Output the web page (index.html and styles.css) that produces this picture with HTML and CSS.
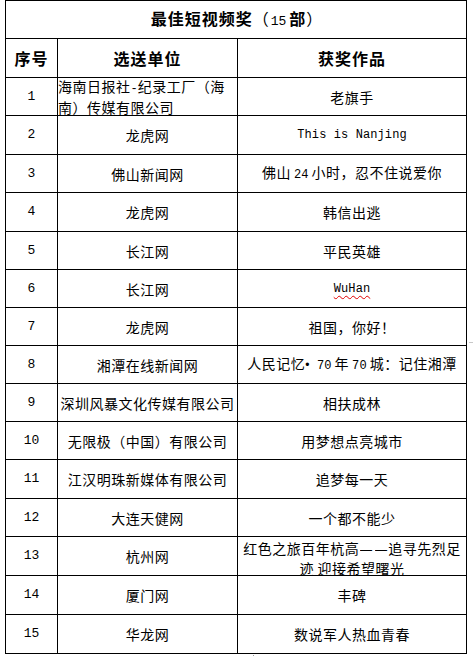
FILE: index.html
```html
<!DOCTYPE html>
<html lang="zh-CN">
<head>
<meta charset="utf-8">
<title>最佳短视频奖（15部）</title>
<link rel="stylesheet" href="styles.css">
</head>
<body>
<div class="sheet">
  <div class="award">
    <div class="cell title"><span class="txt">最佳短视频奖<span class="plain">（<span class="lat-t">15</span></span>部<span class="plain">）</span></span></div>

    <div class="cell head">序号</div>
    <div class="cell head">选送单位</div>
    <div class="cell head">获奖作品</div>

    <div class="cell num">1</div>
    <div class="cell left"><span class="txt">海南日报社<span class="lat">-</span>纪录工厂（海南）传媒有限公司</span></div>
    <div class="cell">老旗手</div>

    <div class="cell num">2</div>
    <div class="cell">龙虎网</div>
    <div class="cell"><span class="lat">This is Nanjing</span></div>

    <div class="cell num">3</div>
    <div class="cell">佛山新闻网</div>
    <div class="cell"><span class="txt">佛山<span class="lat gap">24</span>小时，忍不住说爱你</span></div>

    <div class="cell num">4</div>
    <div class="cell">龙虎网</div>
    <div class="cell">韩信出逃</div>

    <div class="cell num">5</div>
    <div class="cell">长江网</div>
    <div class="cell">平民英雄</div>

    <div class="cell num">6</div>
    <div class="cell">长江网</div>
    <div class="cell"><span class="lat spell">WuHan</span></div>

    <div class="cell num">7</div>
    <div class="cell">龙虎网</div>
    <div class="cell">祖国，你好！</div>

    <div class="cell num">8</div>
    <div class="cell">湘潭在线新闻网</div>
    <div class="cell"><span class="txt">人民记忆<span class="dot">•</span><span class="lat gap">70</span>年<span class="lat gap">70</span>城：记住湘潭</span></div>

    <div class="cell num">9</div>
    <div class="cell">深圳风暴文化传媒有限公司</div>
    <div class="cell">相扶成林</div>

    <div class="cell num">10</div>
    <div class="cell">无限极（中国）有限公司</div>
    <div class="cell">用梦想点亮城市</div>

    <div class="cell num">11</div>
    <div class="cell">江汉明珠新媒体有限公司</div>
    <div class="cell">追梦每一天</div>

    <div class="cell num">12</div>
    <div class="cell">大连天健网</div>
    <div class="cell">一个都不能少</div>

    <div class="cell num">13</div>
    <div class="cell">杭州网</div>
    <div class="cell clip"><span class="txt">红色之旅百年杭高<span class="dash">—</span><span class="dash">—</span>追寻先烈足迹 迎接希望曙光</span></div>

    <div class="cell num">14</div>
    <div class="cell">厦门网</div>
    <div class="cell">丰碑</div>

    <div class="cell num">15</div>
    <div class="cell">华龙网</div>
    <div class="cell">数说军人热血青春</div>
  </div>
  <span class="mark mark-right"></span>
  <span class="mark mark-dot"></span>
</div>
</body>
</html>
```

FILE: styles.css
```css
html, body {
  margin: 0;
  padding: 0;
  background: #ffffff;
}

body {
  font-family: "Noto Sans CJK SC", "Noto Sans", sans-serif;
  font-size: 14px;
  color: #000000;
}

.sheet {
  position: relative;
  width: 474px;
  height: 656px;
}

.award {
  margin-left: 5px;
  width: 462px;
  box-sizing: border-box;
  display: grid;
  grid-template-columns: 51px 179px 228px;
  grid-template-rows: 37px 38px 37px 38px 37px 38px 37px 37px 37px 37px 37px 37px 38px 37px 38px 38px 38px;
  gap: 1px;
  padding: 1px;
  background: #000000;
}

.cell {
  background: #ffffff;
  display: flex;
  align-items: center;
  justify-content: center;
  text-align: center;
  overflow: hidden;
  letter-spacing: 0.5px;
  line-height: 18px;
}

.txt {
  display: block;
}

.title {
  grid-column: 1 / -1;
  font-size: 16px;
  font-weight: 700;
  letter-spacing: 1px;
  padding-left: 2px;
}

.title .plain {
  font-weight: 400;
}

.lat-t {
  font-family: "Liberation Mono", monospace;
  font-size: 13px;
  letter-spacing: 0;
  margin: 0 3px 0 1px;
}

.head {
  font-size: 16px;
  font-weight: 700;
  letter-spacing: 1px;
}

.num {
  font-family: "Liberation Mono", monospace;
  font-size: 13px;
  letter-spacing: 0;
}

.lat {
  font-family: "Liberation Mono", monospace;
  font-size: 12px;
  letter-spacing: 0.1px;
}

.gap {
  margin: 0 3px;
}

.dot {
  font-family: "Liberation Sans", sans-serif;
  font-size: 12px;
  margin-right: 4px;
}

.dash {
  display: inline-block;
  width: 14.5px;
  text-align: center;
  font-family: "Liberation Sans", sans-serif;
  transform: scaleX(0.86);
}

.spell {
  text-decoration: underline wavy #e00000;
  text-decoration-thickness: 1px;
  text-underline-offset: 3px;
}

.left {
  justify-content: flex-start;
  text-align: left;
}

.left .txt {
  width: 100%;
}

.clip {
  align-items: flex-start;
  padding-top: 2px;
  line-height: 19px;
}

.mark {
  position: absolute;
  background: #c8c8c8;
}

.mark-right {
  left: 469px;
  top: 342px;
  width: 4px;
  height: 1px;
}

.mark-dot {
  left: 253px;
  top: 655px;
  width: 1px;
  height: 1px;
  background: #9a9a9a;
}
```
